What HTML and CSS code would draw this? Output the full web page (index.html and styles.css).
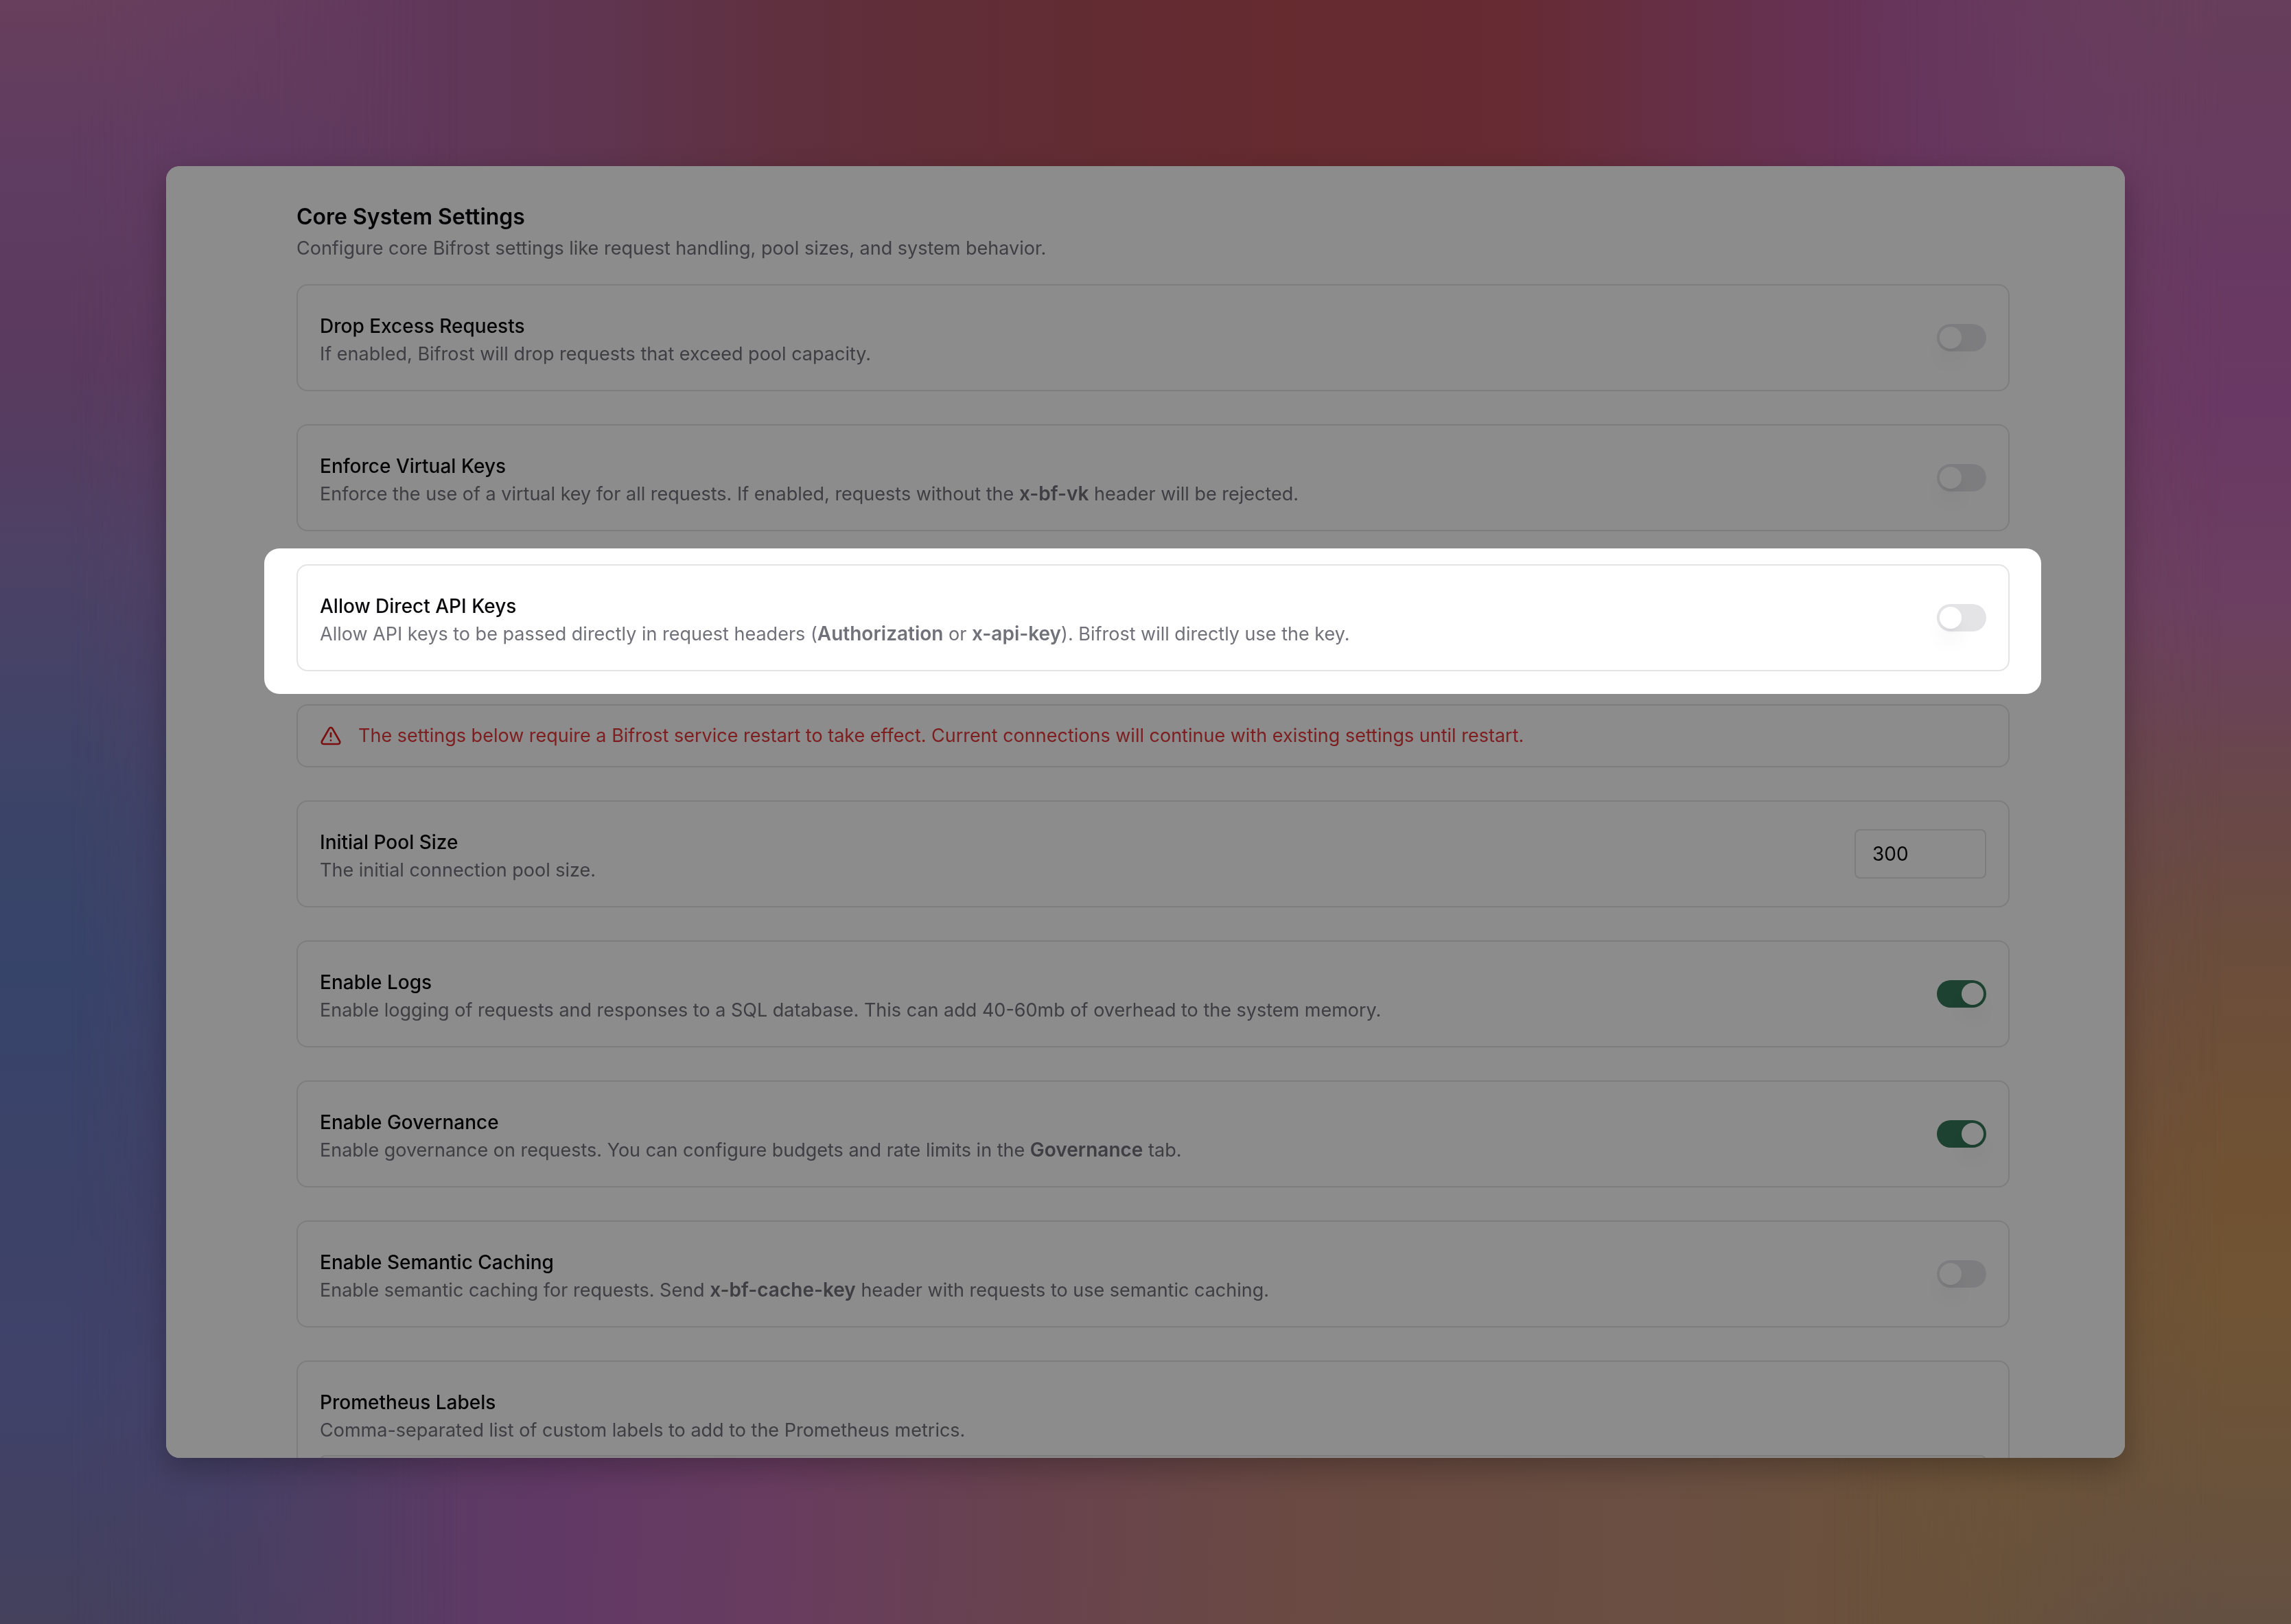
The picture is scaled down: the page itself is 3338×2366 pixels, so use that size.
FILE: index.html
```html
<!DOCTYPE html>
<html lang="en">
<head>
<meta charset="utf-8">
<title>Core System Settings</title>
<link rel="stylesheet" href="styles.css">
</head>
<body>
<main class="panel">
  <header class="intro">
    <h1>Core System Settings</h1>
    <p>Configure core Bifrost settings like request handling, pool sizes, and system behavior.</p>
  </header>
  <div class="settings">
    <section class="card">
      <div class="text">
        <label class="title" for="drop">Drop Excess Requests</label>
        <p>If enabled, Bifrost will drop requests that exceed pool capacity.</p>
      </div>
      <input class="switch" type="checkbox" role="switch" id="drop">
    </section>
    <section class="card">
      <div class="text">
        <label class="title" for="enforce">Enforce Virtual Keys</label>
        <p>Enforce the use of a virtual key for all requests. If enabled, requests without the <b>x-bf-vk</b> header will be rejected.</p>
      </div>
      <input class="switch" type="checkbox" role="switch" id="enforce">
    </section>
    <section class="card spotlight">
      <div class="text">
        <label class="title" for="direct">Allow Direct API Keys</label>
        <p>Allow API keys to be passed directly in request headers (<b>Authorization</b> or <b>x-api-key</b>). Bifrost will directly use the key.</p>
      </div>
      <input class="switch" type="checkbox" role="switch" id="direct">
    </section>
    <div class="alert" role="alert">
      <svg class="alert-icon" viewBox="0 0 24 24" aria-hidden="true"><path d="m21.73 18-8-14a2 2 0 0 0-3.48 0l-8 14A2 2 0 0 0 4 21h16a2 2 0 0 0 1.73-3"/><path d="M12 9v4"/><path d="M12 17h.01"/></svg>
      <p>The settings below require a Bifrost service restart to take effect. Current connections will continue with existing settings until restart.</p>
    </div>
    <section class="card">
      <div class="text">
        <label class="title" for="pool">Initial Pool Size</label>
        <p>The initial connection pool size.</p>
      </div>
      <input class="field pool" type="text" inputmode="numeric" id="pool" value="300">
    </section>
    <section class="card">
      <div class="text">
        <label class="title" for="logs">Enable Logs</label>
        <p>Enable logging of requests and responses to a SQL database. This can add 40-60mb of overhead to the system memory.</p>
      </div>
      <input class="switch" type="checkbox" role="switch" id="logs" checked>
    </section>
    <section class="card">
      <div class="text">
        <label class="title" for="governance">Enable Governance</label>
        <p>Enable governance on requests. You can configure budgets and rate limits in the <b>Governance</b> tab.</p>
      </div>
      <input class="switch" type="checkbox" role="switch" id="governance" checked>
    </section>
    <section class="card">
      <div class="text">
        <label class="title" for="caching">Enable Semantic Caching</label>
        <p>Enable semantic caching for requests. Send <b>x-bf-cache-key</b> header with requests to use semantic caching.</p>
      </div>
      <input class="switch" type="checkbox" role="switch" id="caching">
    </section>
    <section class="card stacked">
      <div class="text">
        <label class="title" for="labels">Prometheus Labels</label>
        <p>Comma-separated list of custom labels to add to the Prometheus metrics.</p>
      </div>
      <textarea class="field" id="labels" rows="3"></textarea>
    </section>
  </div>
</main>
</body>
</html>
```
FILE: styles.css
```css
* { box-sizing: border-box; margin: 0; }

body {
  min-height: 100vh;
  padding: 242px;
  font-family: Inter, "Liberation Sans", sans-serif;
  font-size: 28px;
  line-height: 40px;
  color: #09090b;
  background: linear-gradient(92deg, #44405e, #4b3f68 10%, #573c64 17%, #613965 26%, #683c60 35%, #68424f 45%, #6a4a42 58%, #6a4f42 73%, #6c5338 88%, #665040 96%, #625040);
}

/* Backdrop wash: the top band and the two side bands fade into the base */
body::before,
body::after {
  content: "";
  position: fixed;
  inset: 0;
  z-index: -1;
}

body::before {
  background: linear-gradient(90deg, #683f5c, #623a61 8%, #60385c 17%, #5f3550 26%, #60303f 34%, #612d36 42%, #652b2f 56%, #662b33 66%, #66304a 75%, #67345e 84%, #683a60 92%, #673f5a);
  mask-image: linear-gradient(#000 12%, transparent 85%);
}

body::after {
  background:
    linear-gradient(#683f5c, #603c61 9%, #5a3a5e 22%, #4c4266 35%, #3b4468 50%, #37446a 60%, #3d4268 75%, #40426a 85%, #44405c) left / 50% 100% no-repeat,
    linear-gradient(#673e5b, #683a62 15%, #6a3864 25%, #6c3f62 37%, #69474b 48%, #6b4d3c 58%, #705233 72%, #705434 80%, #6b533a 90%, #645042) right / 50% 100% no-repeat;
  mask-image: linear-gradient(90deg, #000 3%, transparent 20%, transparent 80%, #000 97%);
}

.panel {
  height: calc(100vh - 484px);
  padding: 48px 168px 0 190px;
  overflow: hidden;
  background: #fff;
  border-radius: 20px;
  box-shadow: 0 16px 40px rgba(0, 0, 0, 0.25);
}

.intro { padding-bottom: 32px; }

h1 {
  font-size: 32px;
  line-height: 52px;
  font-weight: 600;
}

p {
  font-size: 27px;
  color: #71717a;
}

b {
  font-size: 28px;
  line-height: 1;
  font-weight: 600;
}

.settings {
  display: flex;
  flex-direction: column;
  gap: 48px;
}

.card {
  display: flex;
  align-items: center;
  justify-content: space-between;
  padding: 32px;
  border: 2px solid #e4e4e4;
  border-radius: 16px;
}

.stacked {
  flex-direction: column;
  align-items: stretch;
  gap: 16px;
}

.title {
  display: block;
  padding-top: 6px;
  line-height: 42px;
  font-weight: 500;
}

/* Guided tour: everything but the lit card is dimmed */
.spotlight { position: relative; }

.spotlight::after {
  content: "";
  position: absolute;
  inset: -25px -48px -35px -49px;
  border-radius: 22px;
  box-shadow: 0 0 0 4000px rgba(0, 0, 0, 0.45);
  pointer-events: none;
  z-index: 1;
}

.alert {
  display: flex;
  align-items: center;
  gap: 24px;
  padding: 24px 32px;
  border: 2px solid #e4e4e4;
  border-radius: 16px;
}

.alert p { color: #e3393c; }

.alert-icon {
  flex: none;
  width: 32px;
  height: 32px;
  fill: none;
  stroke: #e01a1a;
  stroke-width: 2;
  stroke-linecap: round;
  stroke-linejoin: round;
}

.switch {
  appearance: none;
  flex: none;
  display: flex;
  align-items: center;
  width: 72px;
  height: 40px;
  padding: 4px;
  border-radius: 20px;
  background: #e4e4e7;
}

.switch::before {
  content: "";
  width: 32px;
  height: 32px;
  border-radius: 50%;
  background: #fff;
  box-shadow: 0 20px 30px -6px rgba(0, 0, 0, 0.1), 0 8px 12px -8px rgba(0, 0, 0, 0.1);
}

.switch:checked {
  justify-content: flex-end;
  background: #357859;
}

.field {
  padding: 8px 24px;
  border: 2px solid #e4e4e4;
  border-radius: 8px;
  background: transparent;
  color: inherit;
  font: inherit;
  resize: none;
}

.pool {
  width: 192px;
  height: 72px;
}
```
